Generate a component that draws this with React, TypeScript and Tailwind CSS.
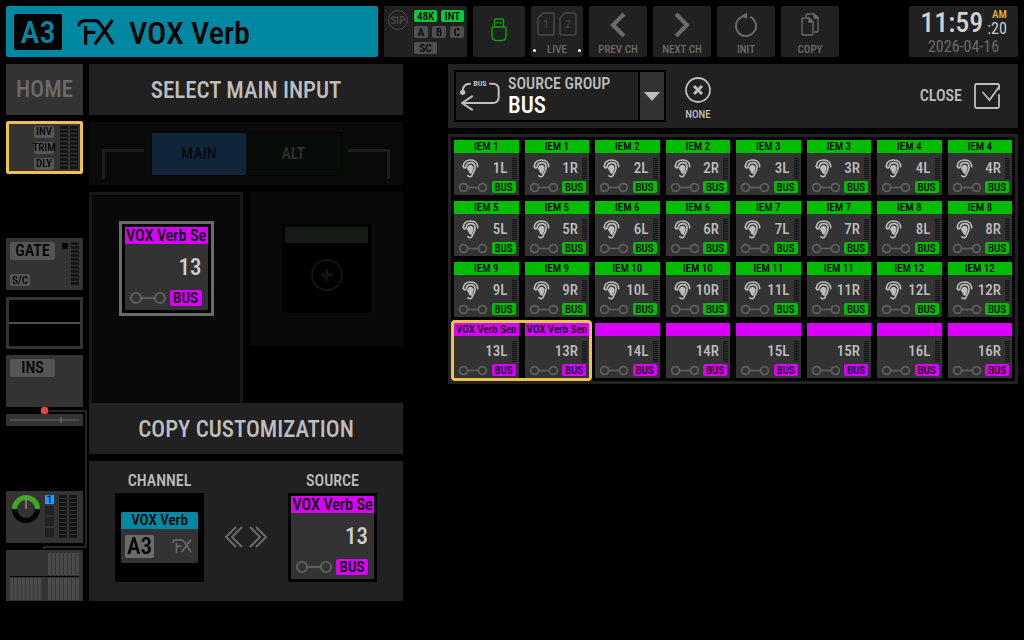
import type { ReactNode } from "react";
import clsx from "clsx";

type Send = { name: string; channel: number; color: "green" | "magenta"; selected?: boolean };

const SENDS: Send[] = [
  ...Array.from({ length: 12 }, (_, i) => ({
    name: `IEM ${i + 1}`,
    channel: i + 1,
    color: "green" as const,
  })),
  { name: "VOX Verb Sen", channel: 13, color: "magenta", selected: true },
  { name: "", channel: 14, color: "magenta" },
  { name: "", channel: 15, color: "magenta" },
  { name: "", channel: 16, color: "magenta" },
];

function FxLogo({ className }: { className: string }) {
  return (
    <svg viewBox="0 0 116 80" className={className} fill="none" stroke="currentColor" strokeWidth="10">
      <path d="M4 22C6 10 12 5 26 5H54C64 5 68 11 73 19L111 77" />
      <path d="M109 3L54 78M26 22V79M26 41H56" />
    </svg>
  );
}

function EarIcon() {
  return (
    <svg viewBox="0 0 50 58" className="w-[17px] h-[19px] text-[#bdbdbd]" fill="none" stroke="currentColor" strokeWidth="5" strokeLinecap="round">
      <path d="M3 22C4 9 14 3 26 3C40 3 47 13 47 24" />
      <path d="M3 22C5 30 12 28 12 22C13 15 19 11 26 11C35 11 39 17 39 25C39 37 33 40 31 47C29 55 22 56 17 51" />
      <path
        d="M19 24C21 18 30 18 32 26C33 34 27 37 26 43C20 41 22 35 20 33C16 31 16 27 19 24Z"
        fill="currentColor"
      />
    </svg>
  );
}

function LinkIcon({ className }: { className: string }) {
  return (
    <svg viewBox="0 0 38 14" className={className} fill="none" stroke="#5f5f5f" strokeWidth="2.2">
      <circle cx="7" cy="7" r="5" />
      <circle cx="31" cy="7" r="5" />
      <path d="M12 7H26" />
    </svg>
  );
}

function UsbIcon() {
  return (
    <svg viewBox="0 0 16 24" className="w-4 h-6" fill="none" stroke="#0ca30c" strokeWidth="1.4">
      <path d="M3.5 9V2.2Q3.5 1 4.7 1H11.3Q12.5 1 12.5 2.2V9" />
      <path d="M2.5 9H13.5Q15 9 15 10.5V18Q15 22.5 11 22.5H5Q1 22.5 1 18V10.5Q1 9 2.5 9Z" />
      <path d="M6.5 3.5V6M9.5 3.5V6" />
    </svg>
  );
}

function SdCard({ slot }: { slot: number }) {
  return (
    <span className="relative flex w-[18px] h-6 items-center justify-center text-[11px] leading-none">
      <svg viewBox="0 0 18 24" className="absolute inset-0" fill="none" stroke="currentColor" strokeWidth="1.4">
        <path d="M6 1H15Q17 1 17 3V21Q17 23 15 23H3Q1 23 1 21V6Z" />
      </svg>
      {slot}
    </span>
  );
}

function BusLoopIcon() {
  return (
    <svg viewBox="0 0 120 90" className="w-10 h-[30px] shrink-0 overflow-visible text-[#bdbdbd]" fill="none" stroke="currentColor" strokeWidth="6" strokeLinecap="round" strokeLinejoin="round">
      <path d="M8 32C8 14 16 8 30 8M90 8H98Q116 8 116 26V48Q116 66 98 66H8" />
      <path d="M36 46L6 66L36 86" />
      <circle cx="8" cy="34" r="5" fill="currentColor" />
      <text x="60" y="16" textAnchor="middle" fontSize="24" fontWeight="700" stroke="none" fill="currentColor">
        BUS
      </text>
    </svg>
  );
}

function ToolButton({ label, children }: { label: string; children: ReactNode }) {
  return (
    <button className="flex w-[58px] flex-col items-center justify-between bg-[#212121] pt-1 pb-px text-[#6b6b6b] rounded-xs">
      <span className="flex h-[30px] items-center">{children}</span>
      <span className="text-[11px] leading-3 font-medium">{label}</span>
    </button>
  );
}

function Tag({ className, children }: { className: string; children: ReactNode }) {
  return (
    <span className={clsx("flex h-3 items-center justify-center rounded-xs text-[11px] font-medium leading-none text-black", className)}>
      {children}
    </span>
  );
}

function TopBar() {
  return (
    <header className="flex h-[51px] gap-1.5">
      <div className="flex flex-1 items-center bg-[#0088a2] pl-2 rounded-xs">
        <span className="flex h-9 w-12 items-center justify-center rounded-xs bg-black text-[32px] font-medium leading-none text-[#0088a2]">
          A3
        </span>
        <FxLogo className="ml-[15px] w-[38px] h-[26px]" />
        <h1 className="ml-3.5 pt-0.5 text-[32px] font-medium leading-none">VOX Verb</h1>
      </div>

      <div className="flex w-[83px] gap-1.5 bg-[#212121] pl-1 pt-1 text-[#4a4a4a] rounded-xs">
        <span className="flex size-5 items-center justify-center rounded-full border border-[#4a4a4a] text-[11px] font-medium leading-none">
          SIP
        </span>
        <div className="flex flex-col gap-1">
          <div className="flex gap-1">
            <Tag className="w-[23px] bg-[#10c43c]">48K</Tag>
            <Tag className="w-[23px] bg-[#10c43c]">INT</Tag>
          </div>
          <div className="flex gap-1">
            <Tag className="w-3.5 bg-[#4f4f4f]">A</Tag>
            <Tag className="w-3.5 bg-[#4f4f4f]">B</Tag>
            <Tag className="w-3.5 bg-[#4f4f4f]">C</Tag>
          </div>
          <Tag className="w-[23px] bg-[#4f4f4f]">SC</Tag>
        </div>
      </div>

      <button aria-label="USB" className="flex w-[52px] items-center justify-center bg-[#212121] pb-1 rounded-xs">
        <UsbIcon />
      </button>

      <button className="flex w-[52px] flex-col items-center justify-between bg-[#212121] pt-1.5 pb-px text-[#4a4a4a] rounded-xs">
        <span className="flex gap-1">
          <SdCard slot={1} />
          <SdCard slot={2} />
        </span>
        <span className="flex w-full items-center justify-between px-0.5 text-[11px] leading-3 font-medium text-[#6b6b6b]">
          <i className="size-[3px] rounded-full bg-white" />
          LIVE
          <i className="size-[3px] rounded-full bg-white" />
        </span>
      </button>

      <ToolButton label="PREV CH">
        <svg viewBox="0 0 16 26" className="w-4 h-[26px]" fill="none" stroke="currentColor" strokeWidth="4">
          <path d="M14 2L3 13L14 24" />
        </svg>
      </ToolButton>
      <ToolButton label="NEXT CH">
        <svg viewBox="0 0 16 26" className="w-4 h-[26px]" fill="none" stroke="currentColor" strokeWidth="4">
          <path d="M2 2L13 13L2 24" />
        </svg>
      </ToolButton>
      <ToolButton label="INIT">
        <svg viewBox="0 0 24 26" className="w-6 h-[26px]" fill="none" stroke="currentColor" strokeWidth="2">
          <path d="M16 4.8A10 10 0 1 1 8.5 4.6L12 3.8" />
          <path d="M7 4L13 0.5V7Z" fill="currentColor" stroke="none" />
        </svg>
      </ToolButton>
      <ToolButton label="COPY">
        <svg viewBox="0 0 18 24" className="w-[18px] h-6" fill="none" stroke="currentColor" strokeWidth="1.3">
          <path d="M5 4V2Q5 1 6 1H13L17 5V18Q17 19 16 19H13" />
          <path d="M2 5H8L12 9V21Q12 22 11 22H2Q1 22 1 21V6Q1 5 2 5Z" />
          <path d="M8 5V9H12ZM13 1V5H17Z" fill="currentColor" />
        </svg>
      </ToolButton>

      <div className="ml-16 flex w-[109px] flex-col items-center bg-[#212121] pt-0.5 rounded-xs">
        <div className="flex items-center gap-1 text-[#cfcfcf]">
          <span className="text-[28px] font-medium leading-[30px]">11:59</span>
          <span className="flex flex-col items-end text-base leading-4">
            <span className="text-[11px] font-medium leading-3 text-[#e8b923]">AM</span>
            :20
          </span>
        </div>
        <span className="text-base leading-[18px] text-[#6b6b6b]">2026-04-16</span>
      </div>
    </header>
  );
}

function SideMeter({ className }: { className?: string }) {
  return (
    <span
      className={clsx(
        "w-2 bg-[repeating-linear-gradient(to_bottom,#151515_0_3px,#333333_3px_4px)]",
        className,
      )}
    />
  );
}

function Bars() {
  return <span className="h-[22px] bg-[repeating-linear-gradient(to_right,#4a4a4a_0_3px,#383838_3px_4px)]" />;
}

function Sidebar() {
  return (
    <nav className="relative flex w-[77px] shrink-0 flex-col">
      <button className="h-[51px] bg-[#333] pt-0.5 text-[23px] font-medium text-[#6b6b6b]">HOME</button>

      <button className="mt-1.5 flex h-[53px] items-center justify-end gap-0.5 rounded-xs border-[3px] border-[#f2c04c] bg-[#333] pr-0.5">
        <span className="mr-1 flex flex-col gap-1">
          <Tag className="w-5 bg-[#555]">INV</Tag>
          <Tag className="w-5 bg-[#555]">TRIM</Tag>
          <Tag className="w-5 bg-[#555]">DLY</Tag>
        </span>
        <SideMeter className="h-[43px]" />
        <SideMeter className="h-[43px]" />
      </button>

      <button className="mt-16 flex h-[52px] bg-[#333] p-1">
        <span className="flex h-full flex-1 flex-col items-start justify-between">
          <span className="flex h-[18px] w-[45px] items-center justify-center rounded-xs bg-[#555] text-base font-medium leading-none">
            GATE
          </span>
          <Tag className="w-5 bg-[#555]">S/C</Tag>
        </span>
        <span className="mr-[3px] mt-px size-[6px] bg-black" />
        <SideMeter className="h-[43px]" />
      </button>

      <button aria-label="EQ" className="mt-[7px] flex h-[52px] items-center border-[3px] border-[#333]">
        <span className="h-0.5 w-full bg-[#4f4f4f]" />
      </button>

      <button className="mt-1.5 flex h-[52px] items-start bg-[#333] p-1">
        <span className="flex h-[18px] w-[45px] items-center justify-center rounded-xs bg-[#555] text-base font-medium leading-none">
          INS
        </span>
      </button>

      <div className="mt-[7px] flex h-3 items-center bg-[#333] px-1">
        <span className="h-0.5 flex-[3] bg-[#4f4f4f]" />
        <span className="h-1.5 w-0.5 bg-[#5f5f5f]" />
        <span className="h-0.5 flex-1 bg-[#4f4f4f]" />
      </div>

      <button aria-label="Pan" className="mt-[65px] flex h-[52px] items-start gap-0.5 bg-[#333] py-1 pl-1.5 pr-1">
        <svg viewBox="0 0 28 28" className="mr-[3px] size-7" fill="none" strokeWidth="5">
          <path d="M2.5 14A11.5 11.5 0 0 1 25.5 14" stroke="#3fa81c" />
          <path d="M2.5 14A11.5 11.5 0 0 0 25.5 14" stroke="#000" />
          <path d="M14 1V14" stroke="#8a8a8a" strokeWidth="1.5" />
        </svg>
        <span className="mr-[3px] flex flex-col gap-0.5">
          <span className="flex size-[9px] items-center justify-center bg-[#1ba1ff] text-[11px] font-medium leading-none">1</span>
          <i className="size-[9px] bg-[#212121]" />
          <i className="size-[9px] bg-[#212121]" />
          <i className="size-[9px] bg-[#212121]" />
        </span>
        <SideMeter className="h-[43px]" />
        <SideMeter className="h-[43px]" />
      </button>

      <button aria-label="Sends" className="mt-[7px] grid h-[51px] grid-cols-2 gap-x-1.5 bg-[#333] px-1 pt-[3px]">
        <span />
        <Bars />
        <span className="col-span-2 h-px bg-black" />
        <Bars />
        <Bars />
      </button>

      {/* signal path from the tap point down to the sends */}
      <svg viewBox="0 0 82 142" className="pointer-events-none absolute left-0 top-[343px] h-[142px] w-[82px]" fill="none">
        <path d="M38 4H80V140H38V142" stroke="#333" strokeWidth="1.5" />
        <rect x="35" y="0" width="7" height="7" rx="2.5" fill="#ff4038" />
      </svg>
    </nav>
  );
}

function ChannelTile() {
  return (
    <div className="flex size-[89px] flex-col border-[3px] border-black bg-[#333]">
      <div className="h-[17px] whitespace-nowrap bg-[#d800fa] text-center text-base font-medium leading-[17px] text-black">
        VOX Verb Se
      </div>
      <div className="flex flex-1 flex-col justify-between pl-1 pr-1.5 pt-3.5 pb-1">
        <span className="text-right text-[23px] font-medium leading-5 text-[#cfcfcf]">13</span>
        <span className="flex items-center justify-between">
          <LinkIcon className="w-[38px] h-3.5" />
          <span className="flex h-4 w-8 items-center justify-center rounded-xs bg-[#d800fa] text-[15px] font-medium leading-none text-black">
            BUS
          </span>
        </span>
      </div>
    </div>
  );
}

function PanelTitle({ children }: { children: ReactNode }) {
  return (
    <h2 className="flex h-[51px] items-center justify-center bg-[#212121] pt-1 text-[23px] font-medium text-[#bdbdbd]">
      {children}
    </h2>
  );
}

function InputPanel() {
  return (
    <section className="flex w-[314px] shrink-0 flex-col">
      <PanelTitle>SELECT MAIN INPUT</PanelTitle>

      <div className="mt-[7px] flex h-[63px] items-center justify-between bg-[#0a0a0a] px-[13px]">
        <span className="mt-5 h-[30px] w-[42px] border-l-3 border-t-3 border-[#1a1f1a]" />
        <div className="flex h-11 w-[191px] border border-black">
          <button className="flex-1 bg-[#10243a] text-base font-medium text-[#060b12]">MAIN</button>
          <button className="flex-1 bg-[#070c08] text-base font-medium text-[#2d302d]">ALT</button>
        </div>
        <span className="mt-5 h-[30px] w-[42px] border-r-3 border-t-3 border-[#1a1f1a]" />
      </div>

      <div className="mt-[7px] flex h-[211px] items-start gap-[7px]">
        <div className="flex h-full w-[154px] justify-center border-3 border-b-0 border-[#151a16] bg-[#090909] pt-[26px]">
          <button className="h-[95px] w-[95px] border-3 border-[#6b6b6b]">
            <ChannelTile />
          </button>
        </div>
        <div className="flex h-[154px] flex-1 justify-center bg-[#090909] pt-8">
          <button aria-label="Add alternative input" className="flex size-[89px] flex-col items-center border-3 border-black bg-black">
            <span className="h-4 w-full bg-[#141a16]" />
            <svg viewBox="0 0 32 32" className="mt-4 size-8" fill="none" stroke="#121612">
              <circle cx="16" cy="16" r="15" strokeWidth="2" />
              <path d="M16 10V22M10 16H22" strokeWidth="3" />
            </svg>
          </button>
        </div>
      </div>

      <PanelTitle>COPY CUSTOMIZATION</PanelTitle>

      <div className="mt-[7px] flex h-[140px] items-start justify-between bg-[#212121] px-[26px] pt-3 text-[#bdbdbd]">
        <div className="flex flex-col items-center gap-1">
          <h3 className="text-base font-medium leading-4">CHANNEL</h3>
          <div className="size-[89px] bg-black px-1.5 pt-[19px]">
            <div className="h-[17px] rounded-t-xs bg-[#0088a2] text-center text-[15px] font-medium leading-[17px] text-black">VOX Verb</div>
            <div className="flex h-[34px] items-center justify-between rounded-b-xs bg-[#333] pl-1 pr-1.5 text-[#6b6b6b]">
              <span className="flex h-[23px] w-[29px] items-center justify-center rounded-xs bg-[#6b6b6b] text-[23px] font-medium leading-none text-black">
                A3
              </span>
              <FxLogo className="w-5 h-3.5" />
            </div>
          </div>
        </div>
        <button aria-label="Copy direction" className="mt-[53px] text-[#6b6b6b]">
          <svg viewBox="0 0 44 22" className="w-11 h-[22px]" fill="none" stroke="currentColor" strokeWidth="2">
            <path d="M12 1L2 11L12 21M18 1L8 11L18 21M26 1L36 11L26 21M32 1L42 11L32 21" />
          </svg>
        </button>
        <div className="flex flex-col items-center gap-1">
          <h3 className="text-base font-medium leading-4">SOURCE</h3>
          <ChannelTile />
        </div>
      </div>
    </section>
  );
}

function SendTile({ send, side }: { send: Send; side: "L" | "R" }) {
  const green = send.color === "green";
  return (
    <button className="flex h-[55px] min-w-0 flex-col bg-[#333] text-black">
      <span
        className={clsx(
          "h-[13px] w-full whitespace-nowrap text-center text-[11px] font-medium leading-[14px]",
          green ? "bg-[#00bd00]" : "bg-[#d800fa]",
        )}
      >
        {send.name}
      </span>
      <span className="flex w-full flex-1 items-center justify-end pl-2 pr-0.5 pt-0.5">
        {green && <EarIcon />}
        <span className="ml-auto mr-1 text-[15px] font-medium leading-none text-[#bdbdbd]">
          {send.channel}
          {side}
        </span>
        <span className="h-[21px] w-[5px] bg-[repeating-linear-gradient(to_bottom,#161616_0_1px,#2b2b2b_1px_2px)]" />
      </span>
      <span className="flex w-full items-center justify-between pb-0.5 pl-1 pr-[3px]">
        <LinkIcon className="w-[30px] h-[11px]" />
        <Tag className={clsx("w-6", green ? "bg-[#00bd00]" : "bg-[#d800fa]")}>BUS</Tag>
      </span>
    </button>
  );
}

function SourcePanel() {
  return (
    <section className="ml-[39px] flex min-w-0 flex-1 flex-col gap-1.5">
      <div className="flex h-16 items-center bg-[#212121] pl-1.5 pr-[18px] text-[#bdbdbd]">
        <div className="flex h-[52px] w-[212px] border-2 border-black">
          <div className="flex min-w-0 flex-1 items-center gap-2 pl-1">
            <BusLoopIcon />
            <div className="flex min-w-0 flex-1 flex-col">
              <label htmlFor="source-group" className="text-base font-medium leading-5 whitespace-nowrap">
                SOURCE GROUP
              </label>
              <select id="source-group" defaultValue="bus" className="appearance-none bg-transparent text-[23px] font-medium leading-6 text-white">
                <option value="bus">BUS</option>
              </select>
            </div>
          </div>
          <div className="flex w-[26px] items-center justify-center border-l-2 border-black bg-[#333]">
            <svg viewBox="0 0 16 9" className="w-4 h-[9px]" fill="#bdbdbd">
              <path d="M0 0H16L8 9Z" />
            </svg>
          </div>
        </div>

        <button className="ml-[19px] flex flex-col items-center gap-1 pt-2 text-[11px] font-medium leading-4">
          <svg viewBox="0 0 26 26" className="size-[26px]" fill="none" stroke="currentColor">
            <circle cx="13" cy="13" r="12" strokeWidth="1.8" />
            <path d="M9 9L17 17M17 9L9 17" strokeWidth="3" />
          </svg>
          NONE
        </button>

        <button className="ml-auto flex items-center gap-3 text-base font-medium">
          CLOSE
          <svg viewBox="0 0 26 26" className="size-[26px]" fill="none" stroke="currentColor" strokeWidth="1.8" strokeLinecap="round">
            <path d="M25 6V2.5Q25 1 23.5 1H2.5Q1 1 1 2.5V23.5Q1 25 2.5 25H23.5Q25 25 25 23.5V12" />
            <path d="M9 9.5L15.5 17L25 4" />
          </svg>
        </button>
      </div>

      <div className="grid grid-cols-8 gap-1.5 border-3 border-[#212121] bg-black p-[3px]">
        {SENDS.map((send) => (
          <div
            key={send.channel}
            className={clsx(
              "col-span-2 grid grid-cols-2 gap-1.5",
              send.selected && "rounded-[1px] outline-3 outline-[#f2c04c]",
            )}
          >
            <SendTile send={send} side="L" />
            <SendTile send={send} side="R" />
          </div>
        ))}
      </div>
    </section>
  );
}

export default function App() {
  return (
    <div className="min-h-screen bg-black p-1.5 font-['Roboto_Condensed','Roboto',sans-serif] text-black">
      <TopBar />
      <main className="mt-[7px] flex items-start gap-1.5">
        <Sidebar />
        <InputPanel />
        <SourcePanel />
      </main>
    </div>
  );
}
